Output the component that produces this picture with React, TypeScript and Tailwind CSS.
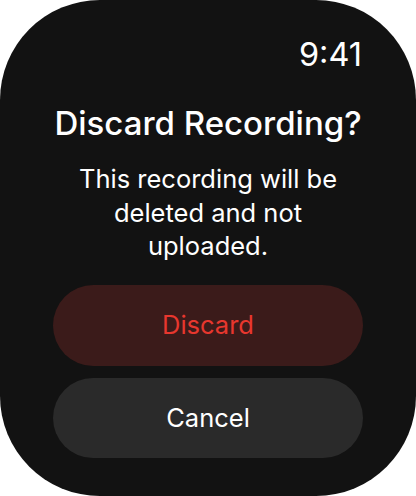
export default function App() {
  return (
    <div className="w-[416px] h-[496px] bg-white" style={{ fontFamily: 'Inter, "Noto Sans", sans-serif' }}>
      <div className="h-full w-full rounded-[100px] bg-[#121212] flex flex-col px-[53px] text-white">
        {/* Status */}
        <div className="flex justify-end pt-[35px] pr-[1px]">
          <span className="text-[32.5px] leading-[40px] font-normal">9:41</span>
        </div>

        {/* Message */}
        <h1 className="mt-[29px] text-center text-[33px] leading-[38px] font-medium whitespace-nowrap">Discard Recording?</h1>
        <p className="mt-[20px] text-center text-[25.5px] leading-[33.5px] px-[10px]">
          This recording will be deleted and not uploaded.
        </p>

        {/* Actions */}
        <div className="mt-auto mb-[38px] flex flex-col gap-[12px]">
          <button className="h-[81px] w-full rounded-full bg-[#3b1b1a] text-[#e8372e] text-[25.5px]">
            Discard
          </button>
          <button className="h-[80px] w-full rounded-full bg-[#2a2a2a] text-white text-[25.5px]">
            Cancel
          </button>
        </div>
      </div>
    </div>
  )
}
